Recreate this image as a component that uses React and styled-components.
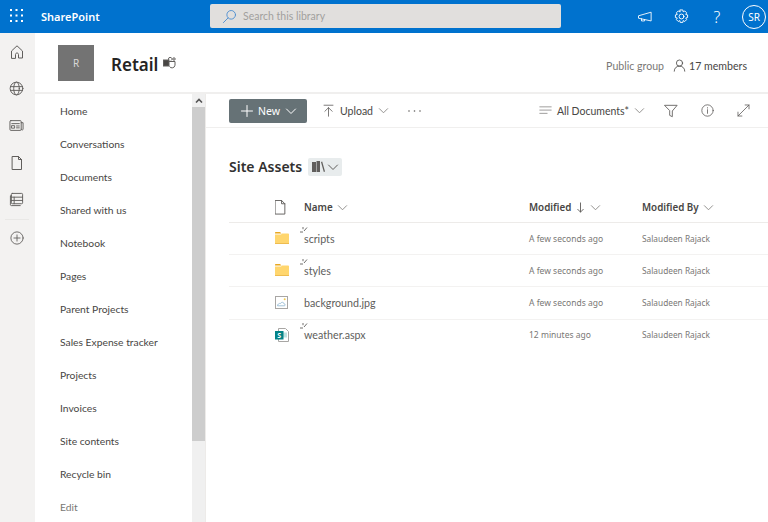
import React from "react";
import styled, { createGlobalStyle } from "styled-components";

const Global = createGlobalStyle`
  html, body { margin: 0; padding: 0; height: 100%; overflow: hidden; background: #fff; }
  body { font-family: "Noto Sans", "Open Sans", sans-serif; color: #323130; }
  * { box-sizing: border-box; }
`;

const Svg = ({ size = 16, color = "currentColor", sw = 1, children, view = "0 0 16 16" }) => (
  <svg width={size} height={size} viewBox={view} fill="none" stroke={color} strokeWidth={sw} strokeLinecap="round" strokeLinejoin="round">
    {children}
  </svg>
);

const Chevron = ({ size = 12, color = "#605e5c" }) => (
  <Svg size={size} color={color} view="0 0 12 12"><path d="M1.5 4l4.5 4.5L10.5 4" /></Svg>
);

const Waffle = () => (
  <svg width="13" height="13" viewBox="0 0 13 13" fill="#fff">
    {[1, 6.5, 12].flatMap((y) => [1, 6.5, 12].map((x) => <rect key={`${x}-${y}`} x={x - 1} y={y - 1} width="2" height="2" />))}
  </svg>
);

const FolderIcon = () => (
  <svg width="14" height="12" viewBox="0 0 14 12">
    <path d="M0 1C0 .4.4 0 1 0h4l1.500 1.500H0z" fill="#e9a820" />
    <path d="M0 2.500h6L7 1.500h6.200c.5 0 .8.300.8.800V11c0 .5-.3 1-.8 1H.8C.3 12 0 11.500 0 11z" fill="#ffd66e" />
    <rect x="0" y="11" width="14" height="1" fill="#eebc50" />
  </svg>
);

const ImageFile = () => (
  <svg width="13" height="13" viewBox="0 0 13 13" fill="none">
    <rect x=".5" y=".5" width="12" height="12" fill="#fff" stroke="#a8a6a4" />
    <path d="M2.500 9.800h6.800c1.100 0 1.100-1.900-.2-1.900C8.800 6 6.300 5.700 5.700 7.400 4.200 7 2.100 8.600 2.500 9.800z" stroke="#8ab4cf" strokeWidth=".8" />
    <circle cx="9.700" cy="3.300" r="1" fill="#f2c94c" />
  </svg>
);

const AspxFile = () => (
  <svg width="14" height="14" viewBox="0 0 14 14" fill="none">
    <path d="M3.500 .5h7l3 3v10h-10z" fill="#fff" stroke="#a8a6a4" />
    <rect x="8" y="4.500" width="4" height="5" fill="#bfe3e1" />
    <rect x="0" y="3" width="8.500" height="8.500" fill="#038387" />
    <text x="4.250" y="9.800" textAnchor="middle" fontSize="7" fontWeight="700" fill="#fff" stroke="none" fontFamily="Noto Sans, sans-serif">S</text>
  </svg>
);

const railIcons = [
  <Svg key="home" size={16}><path d="M2.500 14V7L8 1.800 13.500 7v7h-4v-3.500c0-2-3-2-3 0V14z" /></Svg>,
  <Svg key="globe" size={15}><circle cx="8" cy="8" r="6.800" /><ellipse cx="8" cy="8" rx="3" ry="6.800" /><path d="M1.500 6h13M1.500 10h13" /></Svg>,
  <Svg key="news" size={15}><rect x="1" y="2.800" width="12" height="10.400" rx="1" /><path d="M13 5h2v7c0 1-2 1.200-2 0M3 6h8M3 8.200h3v2.600H3zM8 8.500h3M8 10.500h3" /></Svg>,
  <Svg key="page" size={16}><path d="M3.500 1.500h6l3 3v10h-9zM9.500 1.500v3h3" /></Svg>,
  <Svg key="list" size={15}><rect x="2.500" y="1.500" width="12" height="11" rx="1" /><path d="M2.500 4h-1v9.500c0 .6.400 1 1 1H12M2.500 5.500h12M2.500 9h12M5.500 5.500v7" /></Svg>,
];

const navItems = [
  "Home", "Conversations", "Documents", "Shared with us", "Notebook", "Pages",
  "Parent Projects", "Sales Expense tracker", "Projects", "Invoices", "Site contents", "Recycle bin",
];

const files = [
  { name: "scripts", icon: <FolderIcon />, when: "A few seconds ago", fresh: true },
  { name: "styles", icon: <FolderIcon />, when: "A few seconds ago", fresh: true },
  { name: "background.jpg", icon: <ImageFile />, when: "A few seconds ago" },
  { name: "weather.aspx", icon: <AspxFile />, when: "12 minutes ago", fresh: true },
];

export default function App() {
  return (
    <Page>
      <Global />
      <TopBar>
        <WaffleBox><Waffle /></WaffleBox>
        <Brand>SharePoint</Brand>
        <SearchBox>
          <Svg size={15} color="#4f8fd0"><circle cx="9.800" cy="6.200" r="4.600" /><path d="M6.400 9.600L1.500 14.500" /></Svg>
          <SearchText>Search this library</SearchText>
        </SearchBox>
        <TopIcons>
          <TopIcon>
            <Svg size={14} color="#fff"><path d="M1 6.500l14-4v10l-14-3zM4 10v2.500h3.500V11" /></Svg>
          </TopIcon>
          <TopIcon>
            <Svg size={15} color="#fff"><circle cx="8" cy="8" r="2.600" /><path d="M6.600 1h2.800l.4 2 1.700-.9 2 2-1 1.700 2 .5v2.800l-2 .5 1 1.700-2 2-1.700-1-.4 2H6.600l-.4-2-1.700 1-2-2 1-1.700-2-.5V6.300l2-.5-1-1.700 2-2 1.700.9z" /></Svg>
          </TopIcon>
          <HelpMark>?</HelpMark>
          <Avatar>SR</Avatar>
        </TopIcons>
      </TopBar>
      <Body>
        <Rail>
          {railIcons.map((icon) => <RailIcon key={icon.key}>{icon}</RailIcon>)}
          <RailRule />
          <RailIcon>
            <Svg size={14}><circle cx="8" cy="8" r="7" /><path d="M8 4.500v7M4.500 8h7" /></Svg>
          </RailIcon>
        </Rail>
        <Main>
          <SiteHeader>
            <SiteLogo>R</SiteLogo>
            <SiteName>Retail</SiteName>
            <TeamsGlyph>
              <svg width="13" height="12" viewBox="0 0 13 12" fill="none" stroke="#605e5c" strokeWidth="1">
                <rect x=".5" y="3" width="5.500" height="6" fill="#484644" />
                <path d="M5.500 2.800V2a1.700 1.700 0 1 1 2.500 1.500M6 4.500h6v3.700a3 3 0 0 1-5.500 1.300" />
                <circle cx="11" cy="2" r="1.200" />
              </svg>
            </TeamsGlyph>
            <HeaderRight>
              <GroupLabel>Public group</GroupLabel>
              <Members>
                <Svg size={13} color="#484644"><circle cx="8" cy="5" r="3.800" /><path d="M1.500 15c0-4 3-6.200 6.500-6.200S14.500 11 14.500 15" /></Svg>
                17 members
              </Members>
            </HeaderRight>
          </SiteHeader>
          <Columns>
            <Nav>
              <NavList>
                {navItems.map((item) => <NavItem key={item}>{item}</NavItem>)}
                <NavItem $muted>Edit</NavItem>
              </NavList>
              <ScrollTrack>
                <ScrollArrow>
                  <svg width="8" height="5" viewBox="0 0 8 5" fill="none" stroke="#555" strokeWidth="1.600"><path d="M1 4.500l3-3 3 3" /></svg>
                </ScrollArrow>
                <ScrollThumb />
              </ScrollTrack>
            </Nav>
            <Content>
              <CommandBar>
                <NewButton>
                  <Svg size={12} color="#fff" view="0 0 12 12"><path d="M6 .5v11M.5 6h11" /></Svg>
                  <span>New</span>
                  <Chevron size={12} color="#fff" />
                </NewButton>
                <Command>
                  <Svg size={13} color="#605e5c"><path d="M2.500 1.500h11M8 15V4.500M3.500 9L8 4.500 12.500 9" /></Svg>
                  <span>Upload</span>
                  <Chevron size={11} color="#8a8886" />
                </Command>
                <Dots>
                  <svg width="13" height="2" viewBox="0 0 13 2" fill="#605e5c">
                    <circle cx="1" cy="1" r=".8" /><circle cx="6.500" cy="1" r=".8" /><circle cx="12" cy="1" r=".8" />
                  </svg>
                </Dots>
                <CommandRight>
                  <ViewPicker>
                    <Svg size={13} color="#8a8886"><path d="M1 3.500h14M1 7.500h14M1 11.500h9" /></Svg>
                    <span>All Documents*</span>
                    <Chevron size={11} color="#8a8886" />
                  </ViewPicker>
                  <ToolIcon>
                    <Svg size={14} color="#605e5c"><path d="M1 1.500h14L9.500 8v6.500l-3-1.500V8z" /></Svg>
                  </ToolIcon>
                  <ToolIcon>
                    <Svg size={13} color="#605e5c"><circle cx="8" cy="8" r="7" /><path d="M8 7v4.500M8 4.500v.5" /></Svg>
                  </ToolIcon>
                  <ToolIcon>
                    <Svg size={13} color="#605e5c"><path d="M10 1.200h4.800V6M14.800 1.200L1.200 14.800M1.200 10v4.800H6" /></Svg>
                  </ToolIcon>
                </CommandRight>
              </CommandBar>
              <LibraryTitle>
                <h1>Site Assets</h1>
                <LibrarySwitch>
                  <svg width="13" height="11" viewBox="0 0 13 11" fill="#605e5c">
                    <rect x="0" y="1" width="4" height="10" />
                    <rect x="4.500" y="0" width="3.500" height="11" />
                    <path d="M9 1l1.200-.4L13 10.600 11.800 11z" />
                  </svg>
                  <Chevron size={12} />
                </LibrarySwitch>
              </LibraryTitle>
              <Table>
                <HeadRow>
                  <IconCell>
                    <Svg size={15} color="#605e5c"><path d="M.5 .5H7L10.500 4V15H.5zM7 .5V4h3.500" /></Svg>
                  </IconCell>
                  <NameCell $head>Name <Chevron size={11} color="#8a8886" /></NameCell>
                  <WhenCell $head>Modified <Svg size={11} color="#605e5c" view="0 0 12 12"><path d="M6 1v10M3 8l3 3 3-3" /></Svg> <Chevron size={11} color="#8a8886" /></WhenCell>
                  <ByCell $head>Modified By <Chevron size={11} color="#8a8886" /></ByCell>
                </HeadRow>
                {files.map((file) => (
                  <Row key={file.name}>
                    <IconCell>{file.icon}</IconCell>
                    <NameCell>
                      {file.fresh && (
                        <FreshMark>
                          <svg width="8" height="8" viewBox="0 0 8 8" fill="none" stroke="#605e5c" strokeWidth=".9">
                            <path d="M0 5h3M4 4l3-3.500M3 0v2.200" />
                          </svg>
                        </FreshMark>
                      )}
                      {file.name}
                    </NameCell>
                    <WhenCell>{file.when}</WhenCell>
                    <ByCell>Salaudeen Rajack</ByCell>
                  </Row>
                ))}
              </Table>
            </Content>
          </Columns>
        </Main>
      </Body>
    </Page>
  );
}

const Page = styled.div`
  width: 768px;
  height: 522px;
  display: flex;
  flex-direction: column;
  overflow: hidden;
`;
const TopBar = styled.header`
  height: 33px;
  flex: none;
  background: #0072ce;
  display: flex;
  align-items: center;
  color: #fff;
`;
const WaffleBox = styled.div`
  width: 33px;
  display: flex;
  justify-content: center;
  margin-bottom: 2px;
`;
const Brand = styled.div`
  width: 169px;
  padding-left: 8px;
  margin-bottom: 1px;
  font-size: 11px;
  font-weight: 600;
`;
const SearchBox = styled.div`
  width: 351px;
  height: 24px;
  margin: 0 0 1px 8px;
  padding-left: 12px;
  display: flex;
  align-items: center;
  gap: 6px;
  background: #e1dfdd;
  border-radius: 2px;
`;
const SearchText = styled.span`
  font-family: "Lato", sans-serif;
  font-size: 10.500px;
  color: #a19f9d;
`;
const TopIcons = styled.div`
  margin-left: auto;
  display: flex;
  align-items: center;
  gap: 18px;
  padding-right: 2px;
`;
const TopIcon = styled.div`
  width: 18px;
  display: flex;
  justify-content: center;
`;
const HelpMark = styled.div`
  width: 18px;
  text-align: center;
  font-size: 16px;
  font-weight: 300;
  line-height: 18px;
`;
const Avatar = styled.div`
  width: 24px;
  height: 24px;
  margin-left: -2px;
  border: 1px solid #fff;
  border-radius: 50%;
  display: flex;
  align-items: center;
  justify-content: center;
  font-size: 10px;
`;
const Body = styled.div`
  flex: 1;
  display: flex;
  min-height: 0;
`;
const Rail = styled.aside`
  width: 35px;
  flex: none;
  background: #f3f2f1;
  color: #605e5c;
  display: flex;
  flex-direction: column;
  align-items: center;
  padding: 10px 2px 0 0;
`;
const RailIcon = styled.div`
  height: 37px;
  display: flex;
  align-items: flex-start;
  justify-content: center;
  padding-top: 1px;
`;
const RailRule = styled.div`
  width: 24px;
  height: 1px;
  margin: -9px 0 10px;
  background: #e9e8e6;
`;
const Main = styled.div`
  flex: 1;
  min-width: 0;
  display: flex;
  flex-direction: column;
`;
const SiteHeader = styled.div`
  height: 61px;
  flex: none;
  display: flex;
  align-items: center;
  padding: 0 21px 0 23px;
  border-bottom: 2px solid #f0efee;
`;
const SiteLogo = styled.div`
  width: 36px;
  height: 36px;
  background: #737373;
  color: #d8d8d8;
  display: flex;
  align-items: center;
  justify-content: center;
  font-size: 10px;
`;
const SiteName = styled.div`
  margin: 3px 0 0 17px;
  font-size: 17px;
  font-weight: 600;
  color: #252423;
`;
const TeamsGlyph = styled.div`
  margin: 1px 0 0 5px;
  display: flex;
`;
const HeaderRight = styled.div`
  margin: 6px 0 0 auto;
  display: flex;
  align-items: center;
  gap: 9px;
  font-family: "Lato", sans-serif;
  font-size: 10.600px;
`;
const GroupLabel = styled.span`
  color: #797775;
`;
const Members = styled.span`
  display: flex;
  align-items: center;
  gap: 3px;
  color: #484644;
`;
const Columns = styled.div`
  flex: 1;
  min-height: 0;
  display: flex;
`;
const Nav = styled.nav`
  width: 171px;
  flex: none;
  display: flex;
  border-right: 1px solid #edebe9;
`;
const NavList = styled.div`
  flex: 1;
  padding: 0 0 0 25px;
  overflow: hidden;
`;
const NavItem = styled.div`
  height: 33px;
  display: flex;
  align-items: center;
  font-family: "Lato", sans-serif;
  font-size: 10.300px;
  white-space: nowrap;
  color: ${(p) => (p.$muted ? "#797775" : "#484644")};
`;
const ScrollTrack = styled.div`
  width: 13px;
  flex: none;
  background: #f0f0f0;
  display: flex;
  flex-direction: column;
`;
const ScrollArrow = styled.div`
  height: 13px;
  display: flex;
  align-items: center;
  justify-content: center;
`;
const ScrollThumb = styled.div`
  height: 334px;
  background: #cdcdcd;
`;
const Content = styled.main`
  flex: 1;
  min-width: 0;
  display: flex;
  flex-direction: column;
`;
const CommandBar = styled.div`
  height: 34px;
  flex: none;
  display: flex;
  align-items: center;
  padding-left: 23px;
  border-bottom: 1px solid #f0efee;
  font-family: "Lato", sans-serif;
  font-size: 10.500px;
  color: #484644;
`;
const NewButton = styled.div`
  width: 78px;
  height: 24px;
  padding-left: 12px;
  display: flex;
  align-items: center;
  gap: 5px;
  background: #667276;
  border-radius: 2px;
  color: #fff;
  font-family: "Noto Sans", sans-serif;
  font-size: 10.500px;
`;
const Command = styled.div`
  margin-left: 15px;
  display: flex;
  align-items: center;
  gap: 5px;
`;
const Dots = styled.div`
  margin-left: 19px;
  display: flex;
`;
const CommandRight = styled.div`
  margin-left: auto;
  padding-right: 18px;
  display: flex;
  align-items: center;
  gap: 23px;
`;
const ViewPicker = styled.div`
  display: flex;
  align-items: center;
  gap: 5px;
  margin-right: -4px;
`;
const ToolIcon = styled.div`
  display: flex;
`;
const LibraryTitle = styled.div`
  margin: 29px 0 0 23px;
  display: flex;
  align-items: center;
  gap: 6px;
  h1 {
    margin: 0;
    font-size: 14px;
    font-weight: 600;
    color: #323130;
  }
`;
const LibrarySwitch = styled.div`
  width: 34px;
  height: 18px;
  background: #e8eced;
  border-radius: 2px;
  display: flex;
  align-items: center;
  justify-content: center;
  gap: 2px;
`;
const Table = styled.div`
  margin: 16px 0 0 23px;
`;
const HeadRow = styled.div`
  height: 31px;
  display: flex;
  align-items: center;
  border-bottom: 1px solid #edebe9;
`;
const Row = styled.div`
  height: 32.200px;
  padding-bottom: 1px;
  display: flex;
  align-items: center;
  border-bottom: 1px solid #f3f2f1;
  &:last-child {
    border-bottom-color: transparent;
  }
`;
const IconCell = styled.div`
  width: 75px;
  flex: none;
  display: flex;
  padding-left: 46px;
`;
const headCell = (p) => (p.$head ? `font-family: "Noto Sans", sans-serif; font-size: 9.800px; font-weight: 600; color: #484644;` : "");
const NameCell = styled.div`
  position: relative;
  width: 225px;
  flex: none;
  display: flex;
  align-items: center;
  gap: 4px;
  font-family: "Lato", sans-serif;
  font-size: 10.700px;
  color: #605e5c;
  ${headCell}
`;
const WhenCell = styled.div`
  width: 113px;
  flex: none;
  display: flex;
  align-items: center;
  gap: 4px;
  font-size: 8.500px;
  color: #797775;
  ${headCell}
`;
const ByCell = styled.div`
  flex: 1;
  display: flex;
  align-items: center;
  gap: 4px;
  font-size: 8.300px;
  color: #797775;
  white-space: nowrap;
  ${headCell}
`;
const FreshMark = styled.span`
  position: absolute;
  left: -4px;
  top: -5px;
  display: flex;
`;
